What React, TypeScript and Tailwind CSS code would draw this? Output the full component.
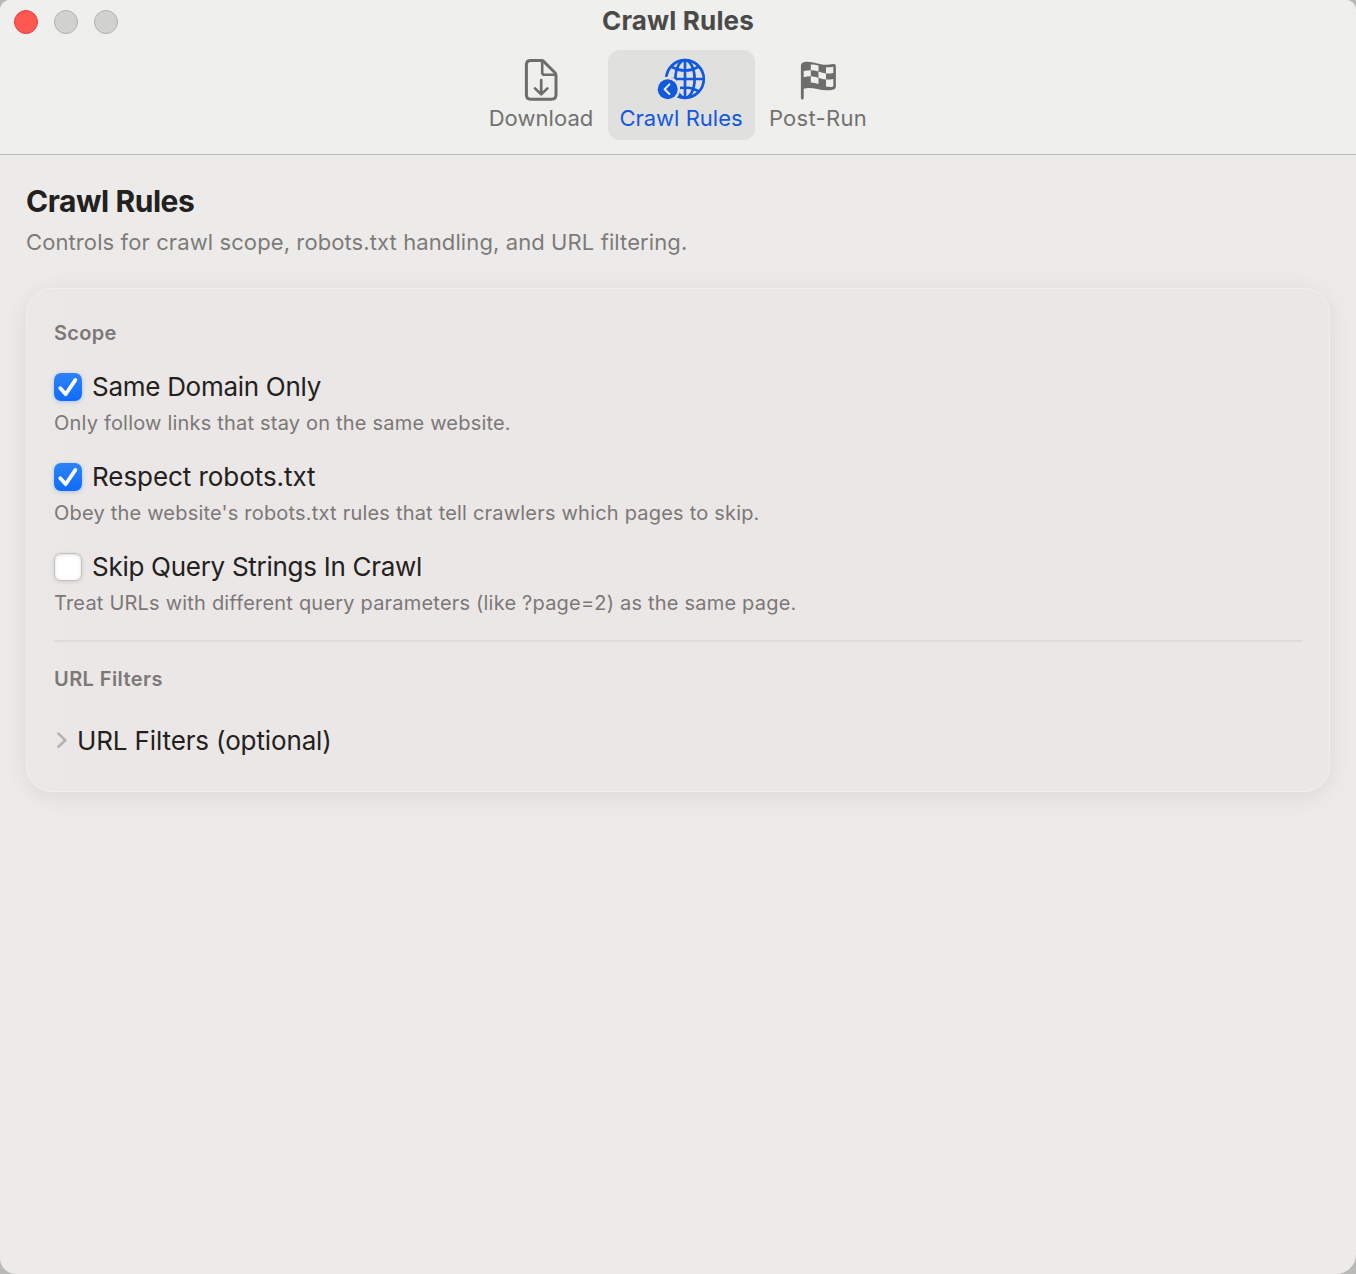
import type { ReactNode } from "react";

function DownloadIcon() {
  return (
    <svg className="block h-[44px] w-[36px]" viewBox="0 0 36 44" fill="none" stroke="#6d6d6b" strokeWidth="3" strokeLinecap="round" strokeLinejoin="round">
      <path d="M7.5 2.6H18.6Q19.8 2.6 20.8 3.6L32 14.8Q33 15.8 33 17.4V36.8Q33 41.2 28.6 41.2H7.5Q3.4 41.2 3.4 37V6.8Q3.4 2.6 7.5 2.6Z" />
      <path d="M19.2 3.4V14.4Q19.2 16.8 21.6 16.8H32.4" strokeWidth="2.6" />
      <path d="M18.2 22V35.4M12 30.4L18.2 36.4L24.4 30.4" strokeWidth="2.7" />
    </svg>
  );
}

function GlobeIcon() {
  return (
    <svg className="-ml-[2px] block h-[44px] w-[52px]" viewBox="0 0 52 44" fill="none" stroke="#1259dc" strokeWidth="2.7">
      <circle cx="31" cy="21" r="18.8" />
      <ellipse cx="31" cy="21" rx="9.6" ry="18.8" />
      <path d="M31 2V40M12 21H50M17 8.5Q31 16.5 45 8.5M17 33.5Q31 25.5 45 33.5" />
      <circle cx="13.7" cy="31.2" r="12.4" fill="#e0e0df" stroke="none" />
      <circle cx="13.7" cy="31.2" r="10" fill="#1259dc" stroke="none" />
      <path d="M15.4 26.4L10.6 31.2L15.4 36" stroke="#e8edf6" strokeWidth="2" strokeLinecap="round" strokeLinejoin="round" />
    </svg>
  );
}

function FlagIcon() {
  return (
    <svg className="block h-[44px] w-[40px]" viewBox="0 0 40 44">
      <path d="M2.9 40V8Q2.9 4.6 6.5 4.1C16 2.5 22 9 35 6.1Q37.9 5.5 37.9 8.2V28.6Q37.9 31 35.7 31.5C23 34.5 16 28.2 5.7 30.7V40Q5.7 41.6 4.3 41.6Q2.9 41.6 2.9 40Z" fill="#6d6d6b" />
      <g fill="#efefed">
        <path d="M12.8 6.4Q16.6 6.3 20.5 7.6V13.6Q16.6 12.2 12.8 12.2Z" />
        <path d="M28 9.3Q31.8 9.5 35.3 8.7V14.9Q31.8 15.7 28 15.4Z" />
        <path d="M5.7 13.1Q9 12.2 12.8 12.2V18.3Q9 18.3 5.7 19.2Z" />
        <path d="M20.5 13.6Q24.4 15 28 15.4V21.5Q24.4 21.1 20.5 19.7Z" />
        <path d="M12.8 18.3Q16.6 18.4 20.5 19.7V25.9Q16.6 24.6 12.8 24.4Z" />
        <path d="M28 21.5Q31.8 21.8 35.3 21V27.9Q35.3 28.6 34 28.9Q31 29.2 28 28.6Z" />
      </g>
    </svg>
  );
}

function Tab({ icon, label, active, className }: { icon: ReactNode; label: string; active?: boolean; className: string }) {
  return (
    <button className={`flex h-[90px] flex-col items-center rounded-[12px] pt-[8px] ${className} ${active ? "bg-[#e0e0df] text-[#1259dc]" : "text-[#727270]"}`}>
      {icon}
      <span className="mt-[2px] text-[22px] leading-[28px] whitespace-nowrap">{label}</span>
    </button>
  );
}

function CheckRow({ label, help, checked, spacing }: { label: string; help: string; checked?: boolean; spacing: string }) {
  return (
    <div className="h-[90px]">
      <label className="flex h-[32px] items-center gap-[10px]">
        {checked ? (
          <span className="flex size-[28px] items-center justify-center rounded-[7px] bg-gradient-to-b from-[#2c83f6] to-[#0f6bfa] shadow-[0_1px_4px_rgba(20,100,240,0.3)]">
            <svg className="size-[28px]" viewBox="0 0 28 28" fill="none" stroke="#fff" strokeWidth="3.7" strokeLinecap="round" strokeLinejoin="round">
              <path d="M6.2 15.1L11.7 21.2L21.4 6.9" />
            </svg>
          </span>
        ) : (
          <span className="size-[28px] rounded-[7px] border border-[#c4c2c1] bg-white shadow-[0_1px_4px_rgba(0,0,0,0.12),inset_0_1px_3px_rgba(0,0,0,0.14)]" />
        )}
        <span className={`text-[26px] leading-[32px] whitespace-nowrap text-[#222120] ${spacing}`}>{label}</span>
      </label>
      <p className="mt-[7px] text-[20px] leading-[26px] tracking-[0.2px] text-[#7b7877]">{help}</p>
    </div>
  );
}

export default function App() {
  return (
    <div className="h-[1274px] w-[1356px] overflow-hidden bg-[#b9b9b8] font-['Inter',sans-serif]">
      <main className="flex h-[1274px] flex-col overflow-hidden rounded-t-[10px] rounded-br-[20px] rounded-bl-[16px] bg-[#ecebe9]">
        <header className="h-[155px] shrink-0 border-b border-[#bdbdbb] bg-[#efefed]">
          <div className="grid h-[50px] grid-cols-3 items-start">
            <div className="flex gap-[16px] pt-[10px] pl-[14px]">
              <span className="size-[24px] rounded-full border border-[#e0443e] bg-[#fe5851]" />
              <span className="size-[24px] rounded-full border border-[#b0b0af] bg-[#d1d1d0]" />
              <span className="size-[24px] rounded-full border border-[#b0b0af] bg-[#d1d1d0]" />
            </div>
            <h1 className="pt-[5px] text-center text-[26px] leading-[32px] font-bold tracking-[0.15px] text-[#4a4a49]">Crawl Rules</h1>
          </div>
          <nav className="flex justify-center gap-[1px]">
            <Tab icon={<DownloadIcon />} label="Download" className="w-[131px] tracking-[0.05px]" />
            <Tab icon={<GlobeIcon />} label="Crawl Rules" active className="w-[147px] tracking-[0px]" />
            <Tab icon={<FlagIcon />} label="Post-Run" className="w-[125px] tracking-[0.3px]" />
          </nav>
        </header>
        <div className="px-[26px] pt-[27px]">
          <h2 className="text-[30px] leading-[38px] font-bold tracking-[-0.45px] text-[#222120]">Crawl Rules</h2>
          <p className="mt-[8px] text-[22px] leading-[28px] tracking-[0.1px] text-[#7c7b79]">Controls for crawl scope, robots.txt handling, and URL filtering.</p>
          <section className="mt-[32px] h-[504px] rounded-[26px] border-[1.5px] border-[#f1efee] bg-[linear-gradient(90deg,#ebe9e6_0%,#eae7e6_4%,#eae7e6_93%,#e9e8e5_97%,#eae8e6_100%)] px-[27px] pt-[31px] shadow-[0_4px_24px_rgba(0,0,0,0.08)]">
            <h3 className="mb-[25px] text-[20px] leading-[26px] font-semibold tracking-[0.3px] text-[#7b7877]">Scope</h3>
            <CheckRow label="Same Domain Only" help="Only follow links that stay on the same website." checked spacing="tracking-[-0.28px]" />
            <CheckRow label="Respect robots.txt" help="Obey the website's robots.txt rules that tell crawlers which pages to skip." checked spacing="tracking-[-0.06px]" />
            <CheckRow label="Skip Query Strings In Crawl" help="Treat URLs with different query parameters (like ?page=2) as the same page." spacing="tracking-[-0.28px]" />
            <div className="-mt-px h-[2px] bg-[#dedbda]" />
            <h3 className="mt-[24px] text-[20px] leading-[26px] font-semibold tracking-[0.42px] text-[#7b7877]">URL Filters</h3>
            <button className="mt-[33px] flex items-center">
              <svg className="mr-[7px] h-[20px] w-[16px]" viewBox="0 0 16 20" fill="none" stroke="#b5b2b1" strokeWidth="2.6" strokeLinecap="round" strokeLinejoin="round">
                <path d="M4.4 2.6L11.4 9.2L4.4 15.8" />
              </svg>
              <span className="text-[26px] leading-[32px] tracking-[-0.13px] text-[#222120]">URL Filters (optional)</span>
            </button>
          </section>
        </div>
      </main>
    </div>
  );
}
